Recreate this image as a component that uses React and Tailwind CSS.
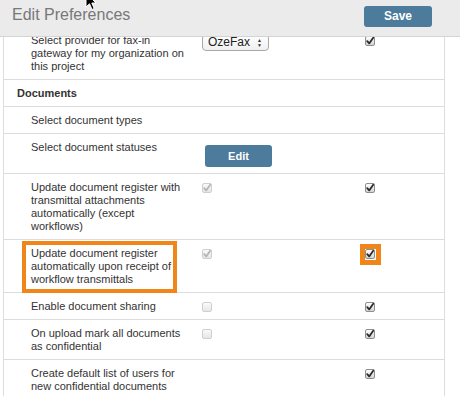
import React from "react";

const Check = ({ checked = true, disabled = false }) => {
  const box = disabled
    ? "border-[#cfcfcf] bg-gradient-to-b from-[#fafafa] to-[#e6e6e6]"
    : "border-[#8e8e8e] bg-gradient-to-b from-[#ffffff] to-[#d4d4d4]";
  return (
    <div className={`relative w-[10px] h-[10px] rounded-[2px] border ${box}`}>
      {checked && (
        <svg viewBox="0 0 10 10" className="absolute -left-px -top-px w-[10px] h-[10px]">
          <path
            d="M2.2 5.2 L4.2 7.4 L8.2 1.8"
            fill="none"
            stroke={disabled ? "#b5b5b5" : "#2b2b2b"}
            strokeWidth="1.8"
            strokeLinecap="round"
            strokeLinejoin="round"
          />
        </svg>
      )}
    </div>
  );
};

const Row = ({ children, col2, col3, highlight }) => (
  <div className="relative grid grid-cols-[171px_163px_1fr] pl-[27px] pt-[7px] pb-[6px] border-b border-[#dcdcdc]">
    <div className="w-[157px]">{children}</div>
    <div>{col2}</div>
    <div>{col3}</div>
    {highlight && (
      <div className="absolute left-[18px] top-[1px] w-[155px] h-[52px] border-[4px] border-[#f0861a]" />
    )}
  </div>
);

const App = () => {
  return (
    <div className="relative w-[460px] h-[396px] overflow-hidden bg-white font-['Liberation_Sans',Arial,sans-serif] text-[11px] leading-[13px] text-[#333]">
      {/* Header */}
      <div className="flex justify-between h-[37px] bg-[#ebebeb] border-b border-[#d4d4d4] pl-[12px] pr-[28px]">
        <h1 className="mt-[5px] text-[16px] leading-[20px] text-[#787878]">Edit Preferences</h1>
        <button className="mt-[6px] w-[68px] h-[21px] rounded-[3px] bg-[#4c7b9b] text-white font-bold text-[12px] leading-[21px]">
          Save
        </button>
      </div>

      {/* Table */}
      <div className="h-[359px] overflow-hidden">
        <div className="-mt-[10px] ml-[3px] w-[442px] border-l border-r border-[#dcdcdc]">
          <Row
            col2={
              <div className="flex items-center justify-between w-[67px] h-[17px] pl-[5px] pr-[6px] rounded-[4px] border border-[#a9a9a9] bg-gradient-to-b from-white to-[#f0f0f0] text-[12px] text-[#222]">
                <span>OzeFax</span>
                <span className="flex flex-col text-[5px] leading-[5px] text-[#333]">
                  <span>▲</span>
                  <span>▼</span>
                </span>
              </div>
            }
            col3={<div className="mt-[2px]"><Check /></div>}
          >
            Select provider for fax-in gateway for my organization on this project
          </Row>

          <div className="pl-[13px] pt-[7px] pb-[6px] border-b border-[#dcdcdc] font-bold">Documents</div>

          <Row>Select document types</Row>

          <Row
            col2={
              <button className="mt-[4px] ml-[3px] w-[67px] h-[22px] rounded-[3px] bg-[#4c7b9b] text-white font-bold text-[11px]">
                Edit
              </button>
            }
          >
            Select document statuses
          </Row>

          <Row
            col2={<div className="mt-[2px]"><Check disabled /></div>}
            col3={<div className="mt-[2px]"><Check /></div>}
          >
            Update document register with transmittal attachments automatically (except workflows)
          </Row>

          <Row
            highlight
            col2={<div className="mt-[2px]"><Check disabled /></div>}
            col3={
              <div className="relative mt-[2px] w-[10px]">
                <div className="absolute -left-[5px] -top-[5px] w-[21px] h-[21px] border-[5px] border-[#f0861a] bg-white" />
                <div className="relative">
                  <Check />
                </div>
              </div>
            }
          >
            Update document register automatically upon receipt of workflow transmittals
          </Row>

          <Row
            col2={<div className="mt-[2px]"><Check checked={false} disabled /></div>}
            col3={<div className="mt-[2px]"><Check /></div>}
          >
            Enable document sharing
          </Row>

          <Row
            col2={<div className="mt-[2px]"><Check checked={false} disabled /></div>}
            col3={<div className="mt-[2px]"><Check /></div>}
          >
            On upload mark all documents as confidential
          </Row>

          <Row col3={<div className="mt-[2px]"><Check /></div>}>
            Create default list of users for new confidential documents
          </Row>
        </div>
      </div>

      {/* Mouse cursor */}
      <svg viewBox="0 0 12 19" className="absolute left-[85px] -top-[8px] w-[12px] h-[19px]">
        <path
          d="M1 1 L1 15 L4.5 11.8 L7 17.5 L9.2 16.5 L6.8 11 L11 11 Z"
          fill="#000"
          stroke="#fff"
          strokeWidth="1"
          strokeLinejoin="round"
        />
      </svg>
    </div>
  );
};

export default App;
